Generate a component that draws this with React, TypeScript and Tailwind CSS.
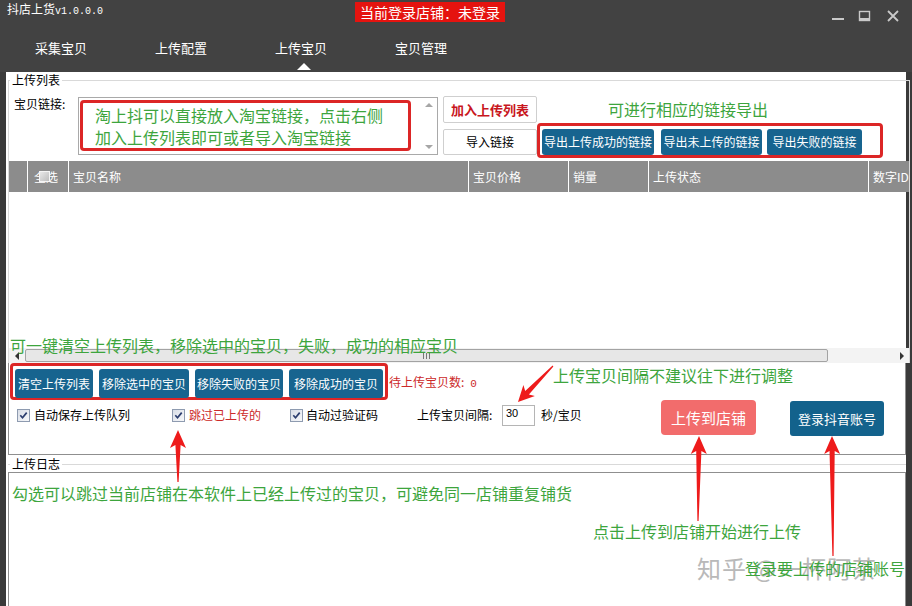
import React from "react";

function Check() {
  return (
    <span className="inline-flex shrink-0 w-[13px] h-[13px] border border-[#8e9bb0] bg-linear-to-br from-[#d9dee7] to-[#f7f8fa] items-center justify-center">
      <svg width="9" height="9" viewBox="0 0 9 9">
        <path d="M1.3 4.3 L3.5 6.7 L7.7 1.6" fill="none" stroke="#2b3d6e" strokeWidth="1.7" />
      </svg>
    </span>
  );
}

function arrowPts(tx: number, ty: number, ex: number, ey: number, hl = 18, hw = 8, sw = 2.6) {
  const dx = ex - tx;
  const dy = ey - ty;
  const L = Math.hypot(dx, dy);
  const ux = dx / L;
  const uy = dy / L;
  const px = -uy;
  const py = ux;
  const bx = tx + ux * hl;
  const by = ty + uy * hl;
  const nx = tx + ux * (hl - 3);
  const ny = ty + uy * (hl - 3);
  const p = [
    [tx, ty],
    [bx + px * hw, by + py * hw],
    [nx + px * sw, ny + py * sw],
    [ex + px * 0.6, ey + py * 0.6],
    [ex - px * 0.6, ey - py * 0.6],
    [nx - px * sw, ny - py * sw],
    [bx - px * hw, by - py * hw],
  ];
  return p.map((q) => q.map((n) => n.toFixed(1)).join(",")).join(" ");
}

const tabs = ["采集宝贝", "上传配置", "上传宝贝", "宝贝管理"];

export default function App() {
  return (
    <div className="relative w-[912px] h-[606px] overflow-hidden bg-[#3a3a3a] flex flex-col font-['Noto_Sans_CJK_SC',sans-serif] text-black">
      {/* Title bar */}
      <div className="h-[72px] bg-[#424242] flex flex-col shrink-0">
        <div className="h-[24px] flex items-start">
          <div className="w-[355px] pl-[7px] pt-[1px] flex items-baseline text-white leading-[16px]">
            <span className="text-[12px]">抖店上货</span>
            <span className="font-['Liberation_Mono',monospace] text-[10px]">v1.0.0.0</span>
          </div>
          <div className="mt-[2px] h-[20px] bg-[#e5130f] px-[5px] text-white text-[14px] leading-[20px] whitespace-nowrap">
            当前登录店铺：未登录
          </div>
          <div className="ml-auto flex items-center pt-[6px] pr-[9px] gap-[6px]">
            <svg width="20" height="20" viewBox="0 0 20 20">
              <rect x="4" y="12" width="12" height="2" fill="#c9c9c9" />
            </svg>
            <svg width="20" height="20" viewBox="0 0 20 20" className="mr-[3px]">
              <rect x="5.5" y="5.5" width="10" height="9" fill="none" stroke="#c9c9c9" strokeWidth="1.4" />
              <rect x="5" y="12" width="11" height="3" fill="#c9c9c9" />
            </svg>
            <svg width="20" height="20" viewBox="0 0 20 20">
              <path d="M5 5 L15 15 M15 5 L5 15" stroke="#c9c9c9" strokeWidth="1.8" />
            </svg>
          </div>
        </div>
        <div className="flex-1 flex pl-[1px]">
          {tabs.map((t, i) => (
            <div key={t} className="w-[120px] flex flex-col items-center pt-[16px]">
              <span className="text-white text-[13px] leading-[16px]">{t}</span>
              {i === 2 && (
                <span className="mt-[7px] ml-[5px] w-0 h-0 border-l-[7px] border-r-[7px] border-b-[7px] border-l-transparent border-r-transparent border-b-white" />
              )}
            </div>
          ))}
        </div>
      </div>

      {/* Body */}
      <div className="flex-1 flex px-[6px] min-h-0">
        <div className="w-[900px] bg-white flex flex-col pl-[2px]">
          {/* Upload list group */}
          <fieldset className="w-[898px] border border-b-0 border-[#d9d9d9]">
            <legend className="ml-[1px] px-[2px] text-[12px] leading-[16px]">上传列表</legend>
            <div className="mt-[8px] h-[62px] flex items-start">
              <div className="w-[69px] pl-[5px] text-[12px] leading-[16px]">宝贝链接:</div>
              <div className="mt-[1px] w-[360px] h-[58px] border border-[#a9a9a9] flex">
                <div className="ml-[1px] mt-[2px] w-[331px] h-[51px] border-[3px] border-[#dc2626] rounded-[4px] pl-[12px] pt-[1px] text-[16px] leading-[22px] text-[#3da53d] whitespace-nowrap">
                  <div>淘上抖可以直接放入淘宝链接，点击右侧</div>
                  <div>加入上传列表即可或者导入淘宝链接</div>
                </div>
                <div className="ml-auto w-[16px] h-full flex flex-col items-center justify-between py-[5px]">
                  <span className="w-0 h-0 border-l-[4px] border-r-[4px] border-b-[4px] border-l-transparent border-r-transparent border-b-[#a6a6a6]" />
                  <span className="w-0 h-0 border-l-[4px] border-r-[4px] border-t-[4px] border-l-transparent border-r-transparent border-t-[#a6a6a6]" />
                </div>
              </div>
              <div className="ml-[5px] w-[94px] flex flex-col gap-[6px]">
                <div className="h-[27px] border border-[#cfcfcf] rounded-[2px] flex items-center justify-center text-[13px] font-bold text-[#c8161d]">
                  加入上传列表
                </div>
                <div className="h-[26px] border border-[#cfcfcf] rounded-[2px] flex items-center justify-center text-[12px]">
                  导入链接
                </div>
              </div>
              <div className="w-[346px] flex flex-col">
                <div className="h-[27px] pt-[2px] pl-[71px] text-[16px] leading-[22px] text-[#3da53d] whitespace-nowrap">
                  可进行相应的链接导出
                </div>
                <div className="h-[35px] border-[3px] border-[#dc2626] rounded-[4px] flex items-start pl-[2px] pt-[3px]">
                  <div className="w-[112px] h-[26px] bg-[#17648f] rounded-[3px] text-white text-[12px] flex items-center justify-center whitespace-nowrap">导出上传成功的链接</div>
                  <div className="ml-[7px] w-[101px] h-[26px] bg-[#17648f] rounded-[3px] text-white text-[12px] flex items-center justify-center whitespace-nowrap">导出未上传的链接</div>
                  <div className="ml-[5px] w-[95px] h-[26px] bg-[#17648f] rounded-[3px] text-white text-[12px] flex items-center justify-center whitespace-nowrap">导出失败的链接</div>
                </div>
              </div>
            </div>
            {/* table header */}
            <div className="mt-[3px] h-[31px] bg-[#8c8c8c] flex text-white text-[12px] leading-[16px]">
              <div className="w-[18px]" />
              <div className="w-[41px] border-l border-white flex items-center pl-[6px] relative overflow-hidden">
                <span>全选</span>
                <span className="absolute left-[11px] top-[10px] w-[11px] h-[11px] bg-linear-to-br from-[#e8e8e8] to-[#bdbdbd] border border-[#f4f4f4]" />
              </div>
              <div className="w-[400px] border-l border-white flex items-center pl-[4px]">宝贝名称</div>
              <div className="w-[100px] border-l border-white flex items-center pl-[4px]">宝贝价格</div>
              <div className="w-[80px] border-l border-white flex items-center pl-[4px]">销量</div>
              <div className="w-[220px] border-l border-white flex items-center pl-[4px]">上传状态</div>
              <div className="flex-1 border-l border-white flex items-center pl-[4px] overflow-hidden whitespace-nowrap">数字ID</div>
            </div>
            <div className="h-[156px]" />
            {/* horizontal scrollbar */}
            <div className="h-[15px] bg-[#f3f3f3] flex items-center">
              <div className="w-[16px] flex justify-center">
                <span className="w-0 h-0 border-t-[4px] border-b-[4px] border-r-[4px] border-t-transparent border-b-transparent border-r-[#333]" />
              </div>
              <div className="w-[803px] h-[13px] bg-[#e7e7e7] border border-[#a3a3a3] rounded-[2px] flex items-center justify-center gap-[2px]">
                <span className="w-[1px] h-[6px] bg-[#777]" />
                <span className="w-[1px] h-[6px] bg-[#777]" />
                <span className="w-[1px] h-[6px] bg-[#777]" />
              </div>
              <div className="flex-1 flex justify-end pr-[5px]">
                <span className="w-0 h-0 border-t-[4px] border-b-[4px] border-l-[4px] border-t-transparent border-b-transparent border-l-[#333]" />
              </div>
            </div>
          </fieldset>

          {/* Options box */}
          <div className="w-[898px] h-[92px] border border-t-0 border-[#8f8f8f] flex flex-col">
            <div className="flex items-center">
              <div className="ml-[1px] w-[378px] h-[37px] border-[3px] border-[#dc2626] rounded-[4px] flex items-start pl-[2px] pt-[3px] gap-[6px]">
                <div className="w-[78px] h-[29px] bg-[#17648f] rounded-[3px] text-white text-[12px] flex items-center justify-center whitespace-nowrap">清空上传列表</div>
                <div className="w-[90px] h-[29px] bg-[#17648f] rounded-[3px] text-white text-[12px] flex items-center justify-center whitespace-nowrap">移除选中的宝贝</div>
                <div className="w-[88px] h-[29px] bg-[#17648f] rounded-[3px] text-white text-[12px] flex items-center justify-center whitespace-nowrap">移除失败的宝贝</div>
                <div className="w-[94px] h-[29px] bg-[#17648f] rounded-[3px] text-white text-[12px] flex items-center justify-center whitespace-nowrap">移除成功的宝贝</div>
              </div>
              <div className="ml-[1px] mt-[2px] text-[12px] text-[#cc2a2a] whitespace-nowrap flex items-baseline">
                <span>待上传宝贝数:</span>
                <span className="ml-[6px] font-['Liberation_Mono',monospace] text-[11px]">0</span>
              </div>
            </div>
            <div className="h-[36px] flex items-start text-[12px] leading-[16px]">
              <div className="ml-[8px] w-[155px] mt-[7px] flex items-center">
                <Check />
                <span className="ml-[4px]">自动保存上传队列</span>
              </div>
              <div className="w-[118px] mt-[7px] flex items-center">
                <Check />
                <span className="ml-[4px] text-[#cc2a2a]">跳过已上传的</span>
              </div>
              <div className="w-[127px] mt-[7px] flex items-center">
                <Check />
                <span className="ml-[3px]">自动过验证码</span>
              </div>
              <div className="w-[85px] mt-[7px]">上传宝贝间隔:</div>
              <div className="w-[33px] h-[21px] mt-[5px] border border-[#b5b5b5] pl-[3px] pt-[1px] text-[11px] leading-[13px] font-['Liberation_Sans',sans-serif]">30</div>
              <div className="ml-[6px] w-[120px] mt-[7px]">秒/宝贝</div>
              <div className="w-[95px] h-[35px] bg-[#f26c6c] rounded-[4px] text-white text-[15px] flex items-center justify-center whitespace-nowrap">上传到店铺</div>
              <div className="ml-[34px] mt-[1px] w-[94px] h-[35px] bg-[#13628c] rounded-[3px] text-white text-[13px] flex items-center justify-center whitespace-nowrap">登录抖音账号</div>
            </div>
          </div>

          {/* Log group */}
          <fieldset className="mt-[1px] w-[898px] border-t border-[#d9d9d9]">
            <legend className="ml-[2px] px-[2px] text-[12px] leading-[16px]">上传日志</legend>
            <div className="h-[134px] border border-b-0 border-[#8f8f8f] text-[16px] leading-[22px] text-[#3da53d] whitespace-nowrap">
              <div className="pt-[9px] pl-[3px]">勾选可以跳过当前店铺在本软件上已经上传过的宝贝，可避免同一店铺重复铺货</div>
              <div className="mt-[16px] ml-[584px]">点击上传到店铺开始进行上传</div>
              <div className="mt-[15px] ml-[736px] relative z-10">登录要上传的店铺账号</div>
            </div>
          </fieldset>
        </div>
      </div>

      {/* Annotation overlays */}
      <div className="absolute left-[10px] top-[334px] text-[16px] leading-[22px] text-[#3da53d] whitespace-nowrap">
        可一键清空上传列表，移除选中的宝贝，失败，成功的相应宝贝
      </div>
      <div className="absolute left-[553px] top-[364px] text-[16px] leading-[22px] text-[#3da53d] whitespace-nowrap">
        上传宝贝间隔不建议往下进行调整
      </div>
      <div className="absolute z-0 left-[697px] top-[553px] text-[24px] leading-[30px] text-[#a8a8a8] opacity-80 whitespace-nowrap tracking-[1px]">
        知乎 @一杯阿茶
      </div>
      <svg className="absolute z-20 left-0 top-0 pointer-events-none" width="912" height="606" viewBox="0 0 912 606">
        <polygon points={arrowPts(178, 430, 178, 482)} fill="#ee1b1b" />
        <polygon points={arrowPts(699, 436, 698, 521)} fill="#ee1b1b" />
        <polygon points={arrowPts(832, 436, 833, 556)} fill="#ee1b1b" />
        <polygon points={arrowPts(518, 402, 553, 366, 16, 8, 2.6)} fill="#ee1b1b" />
      </svg>
    </div>
  );
}
